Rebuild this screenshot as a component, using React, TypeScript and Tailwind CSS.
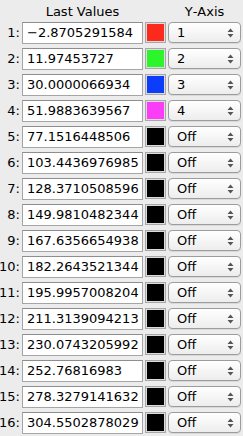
import React from "react";

const rows = [
  { v: "\u22122.8705291584", color: "#fc2a1c", axis: "1" },
  { v: "11.97453727", color: "#2df52c", axis: "2" },
  { v: "30.0000066934", color: "#0b3dfb", axis: "3" },
  { v: "51.9883639567", color: "#fb3df7", axis: "4" },
  { v: "77.1516448506", color: "#000000", axis: "Off" },
  { v: "103.4436976985", color: "#000000", axis: "Off" },
  { v: "128.3710508596", color: "#000000", axis: "Off" },
  { v: "149.9810482344", color: "#000000", axis: "Off" },
  { v: "167.6356654938", color: "#000000", axis: "Off" },
  { v: "182.2643521344", color: "#000000", axis: "Off" },
  { v: "195.9957008204", color: "#000000", axis: "Off" },
  { v: "211.3139094213", color: "#000000", axis: "Off" },
  { v: "230.0743205992", color: "#000000", axis: "Off" },
  { v: "252.76816983", color: "#000000", axis: "Off" },
  { v: "278.3279141632", color: "#000000", axis: "Off" },
  { v: "304.5502878029", color: "#000000", axis: "Off" },
];

function Arrows() {
  return (
    <svg width="7" height="10" viewBox="0 0 7 10" className="shrink-0">
      <path d="M3.5 0.5 L6.5 4 L0.5 4 Z" fill="#555" />
      <path d="M3.5 9.5 L6.5 6 L0.5 6 Z" fill="#555" />
    </svg>
  );
}

export default function App() {
  return (
    <div
      className="h-[436px] w-[243px] overflow-hidden bg-[#ececec] text-[13px] text-black"
      style={{ fontFamily: '"DejaVu Sans", "Liberation Sans", sans-serif' }}
    >
      <div className="grid grid-cols-[20px_121px_21px_73px] gap-x-[2px] gap-y-[4px]">
        {/* header */}
        <div className="h-[18px]" />
        <div className="flex h-[18px] items-end justify-center leading-none">Last Values</div>
        <div className="h-[18px]" />
        <div className="flex h-[18px] items-end justify-center leading-none">Y‑Axis</div>

        {rows.map((r, i) => (
          <React.Fragment key={i}>
            <div className="flex h-[22px] items-center justify-end">{i + 1}:</div>
            <div className="flex h-[22px] items-center border border-[#a5a5a5] border-t-[#8e8e8e] bg-white pl-[4px]">
              {r.v}
            </div>
            <div className="h-[21px] border border-[#a8a8a8] bg-[#dcdcdc] p-[1px]">
              <div className="h-full w-full" style={{ background: r.color }} />
            </div>
            <div className="flex h-[21px] items-center justify-between rounded-[4px] border border-[#9c9c9c] bg-gradient-to-b from-white to-[#ededed] pl-[8px] pr-[6px] shadow-[0_1px_0_rgba(0,0,0,0.08)]">
              <span>{r.axis}</span>
              <Arrows />
            </div>
          </React.Fragment>
        ))}
      </div>
    </div>
  );
}
